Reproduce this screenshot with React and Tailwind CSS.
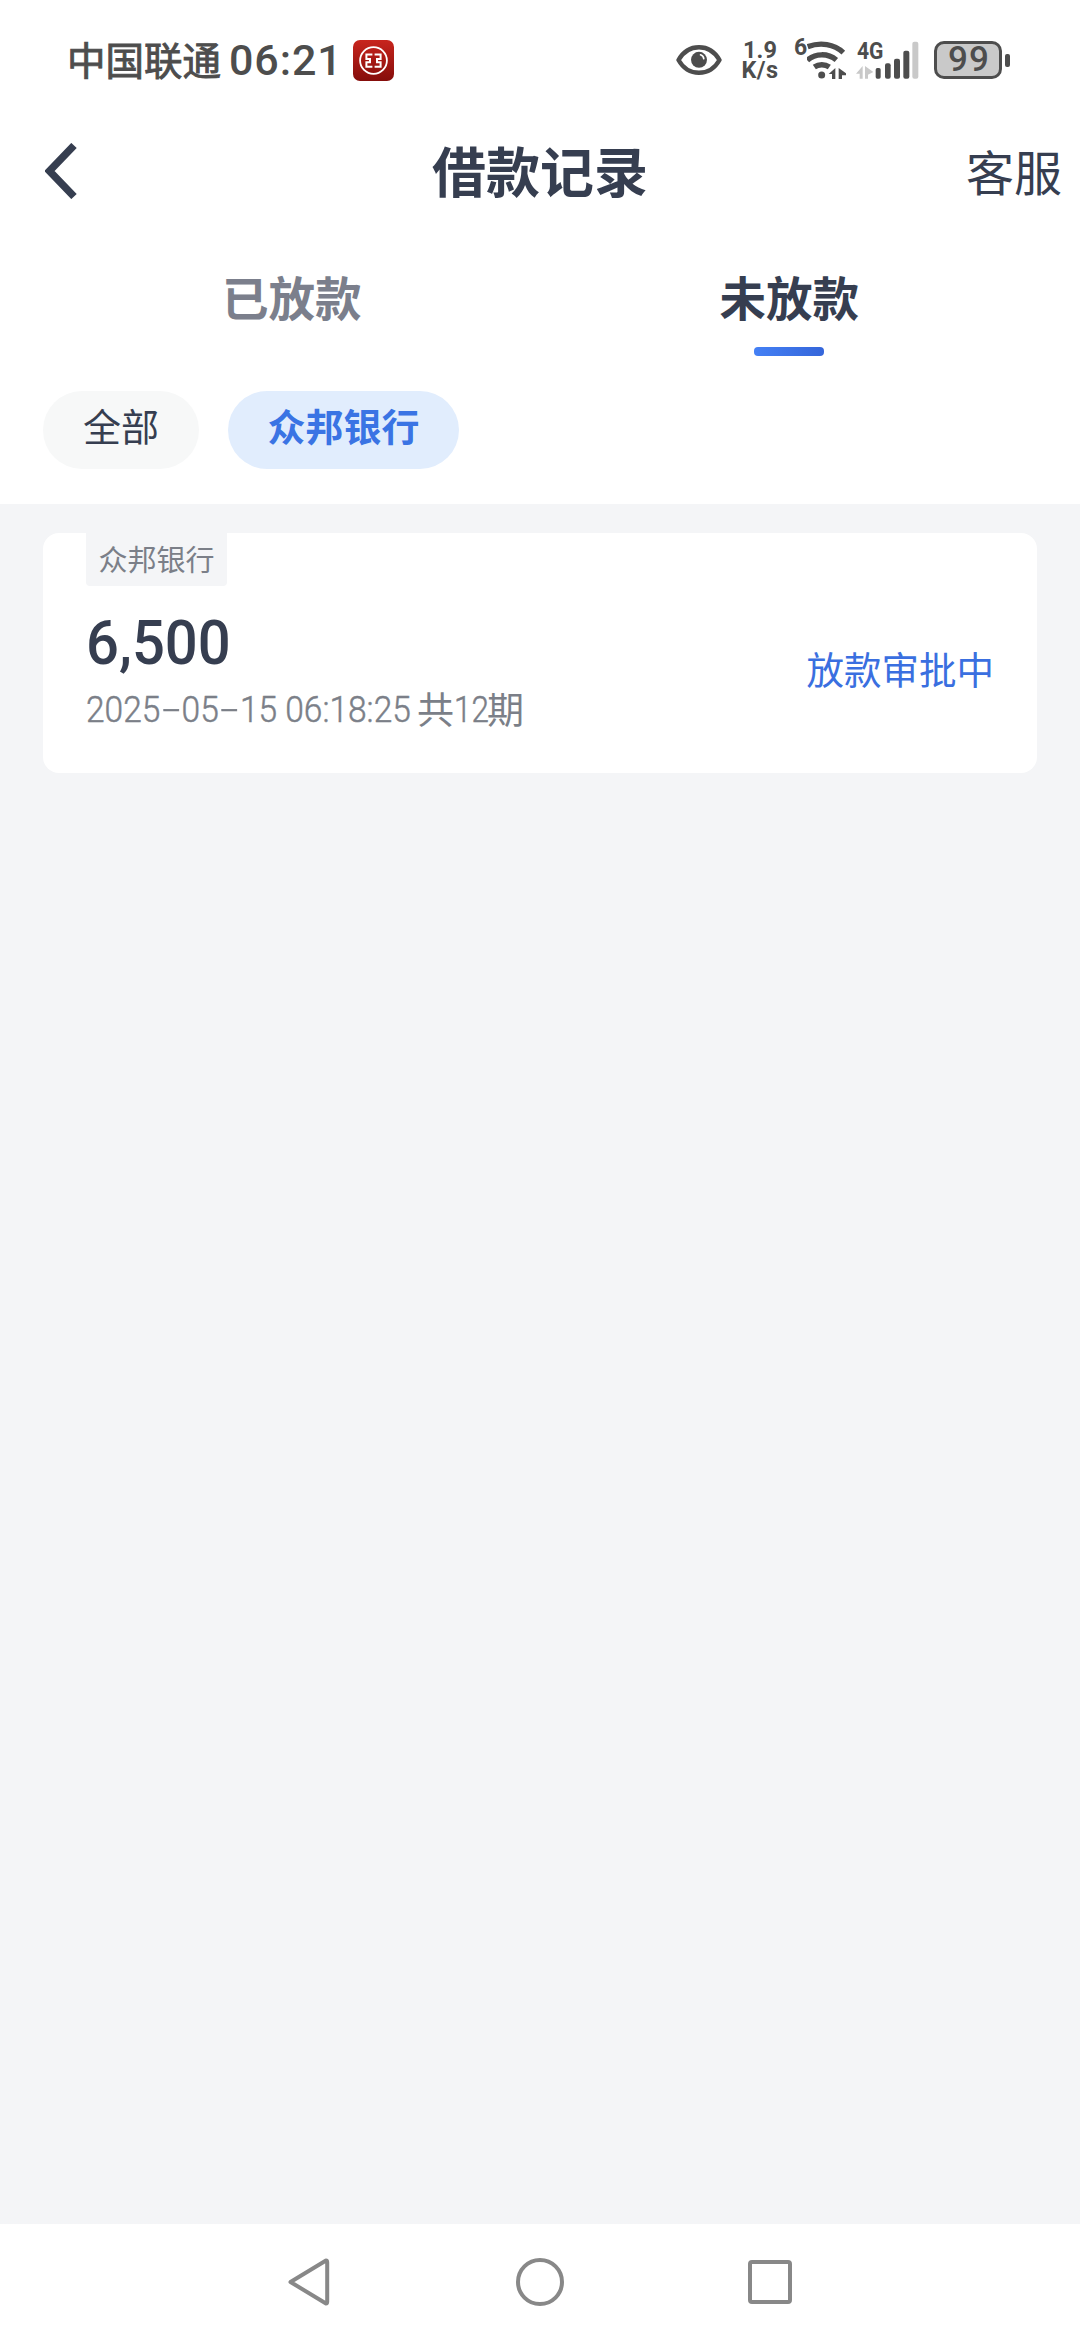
import React from "react";

const INK = "#4d4d4d";

function BankAppIcon() {
  return (
    <svg className="ml-[15px] h-[41px] w-[41px] shrink-0" viewBox="0 0 41 41">
      <defs>
        <linearGradient id="bankRed" x1="0" y1="0" x2="0" y2="1">
          <stop offset="0" stopColor="#c8251d" />
          <stop offset="1" stopColor="#850d0b" />
        </linearGradient>
      </defs>
      <rect width="41" height="41" rx="7" fill="url(#bankRed)" />
      <circle cx="20.5" cy="20.5" r="13.4" fill="none" stroke="#fff" strokeWidth="1.800" />
      <g fill="none" stroke="#fff" strokeWidth="2">
        <path d="M19.400 14.500h-6v4.400h3.600v3.400h-3.600v4.400h6" />
        <path d="M21.600 14.500h6v4.400h-3.600v3.400h3.600v4.400h-6" />
      </g>
    </svg>
  );
}

function EyeIcon() {
  return (
    <svg className="h-[32px] w-[46px] shrink-0" viewBox="0 0 46 32">
      <path
        d="M2.5 16C7 8 14.500 3.200 23 3.200S39 8 43.500 16C39 24 31.500 28.800 23 28.800S7 24 2.500 16Z"
        fill="none"
        stroke={INK}
        strokeWidth="4.400"
        strokeLinejoin="round"
      />
      <circle cx="23" cy="15.800" r="8" fill={INK} />
      <path d="M24.500 10.800q3 1 3.300 4" fill="none" stroke="#fff" strokeWidth="1.600" strokeLinecap="round" />
    </svg>
  );
}

/* Drawn on a triple-density grid: one screen pixel is three units. */
function WifiIcon() {
  return (
    <svg className="h-[40px] w-[39px] shrink-0" viewBox="441 58 117 120">
      <g fill="none" stroke={INK} strokeWidth="16">
        <path d="M443 78C482 64 522 70 550 96" />
        <path d="M442 119C466 97 504 97 529 118" />
        <path d="M463 139C476 130 495 130 508 139" />
      </g>
      <circle cx="485" cy="163" r="10.500" fill={INK} />
      <path d="M526 142v33h-10v-15h-10zM536 142v33h10v-11h12v-6z" fill={INK} />
    </svg>
  );
}

function SignalIcon() {
  return (
    <svg className="h-[40px] w-[63px] shrink-0" viewBox="588 58 189 120">
      <path d="M608 136v38h-9v-15h-11zM615 136v38h9v-12l16-8z" fill="#c9c9c9" />
      <g fill={INK}>
        <rect x="647" y="142" width="15" height="32" rx="5" />
        <rect x="675" y="128" width="17" height="46" rx="6" />
        <rect x="702" y="114" width="18" height="60" rx="6" />
        <rect x="730" y="90" width="18" height="84" rx="6" />
      </g>
      <rect x="757" y="63" width="18" height="111" rx="6" fill="#c9c9c9" />
    </svg>
  );
}

function Battery() {
  return (
    <div className="ml-[15px] flex items-center gap-[3px]">
      <div className="flex h-[38px] w-[68px] items-center justify-center rounded-[10px] border-[3px] border-[#4d4d4d] bg-[#c9c9c9]">
        <span className="pl-[2px] font-[Roboto] text-[35px] font-medium leading-[32px] tracking-[1px] text-[#4d4d4d]">99</span>
      </div>
      <div className="h-[13px] w-[5px] rounded-[2px] bg-[#4d4d4d]" />
    </div>
  );
}

function StatusBar() {
  return (
    <div className="flex h-[120px] items-center justify-between pl-[67px] pr-[70px] text-[#4d4d4d]">
      <div className="flex h-[42px] items-center">
        <span className="pb-[4px] text-[38.500px] leading-[42px] [-webkit-text-stroke:0.9px_#4d4d4d]">中国联通</span>
        <span className="ml-[8px] w-[109px] whitespace-nowrap font-[Roboto] text-[43px] font-medium leading-[42px] tracking-[0.9px]">06:21</span>
        <BankAppIcon />
      </div>
      <div className="flex h-[42px] items-center">
        <EyeIcon />
        <div className="ml-[17px] flex w-[42px] flex-col items-center font-[Roboto] text-[23.500px] font-bold leading-[20px]">
          <span>1.9</span>
          <span className="tracking-[0.5px]">K/s</span>
        </div>
        <span className="ml-[13px] mt-[-1px] w-[13px] self-start font-[Roboto] text-[23px] font-bold leading-[20px]">6</span>
        <WifiIcon />
        <div className="relative ml-[10px] flex">
          <SignalIcon />
          <span className="absolute left-px top-[2px] origin-left scale-x-[0.88] font-[Roboto] text-[24px] font-bold leading-[19px]">4G</span>
        </div>
        <Battery />
      </div>
    </div>
  );
}

function Header() {
  return (
    <header className="grid h-[106px] grid-cols-[1fr_auto_1fr] items-center pb-[5px] pl-[45px] pr-[18px] text-[#363e50]">
      <svg className="h-[56px] w-[33px]" viewBox="0 0 33 56">
        <path d="M29 2.500 4.500 28 29 53.500" fill="none" stroke="#363e50" strokeWidth="7.500" />
      </svg>
      <h1 className="ml-[-27px] pb-[2px] text-[54px] font-bold leading-none">借款记录</h1>
      <span className="justify-self-end pb-[2px] text-[48px] leading-none">客服</span>
    </header>
  );
}

function Tabs() {
  return (
    <nav className="grid h-[130px] grid-cols-2 pl-[43px] pr-[42px] pt-[47px] text-center text-[46.500px] font-bold leading-[46px]">
      <span className="text-[#7b7f8c]">已放款</span>
      <div className="flex flex-col items-center text-[#363e50]">
        <span>未放款</span>
        <span className="mt-[28px] h-[9px] w-[70px] rounded-[4px] bg-linear-to-r from-[#4480f5] to-[#3566da]" />
      </div>
    </nav>
  );
}

function Filters() {
  return (
    <div className="flex h-[148px] gap-[29px] px-[43px] pt-[35px] text-[38px]">
      <button className="flex h-[78px] w-[156px] justify-center rounded-full bg-[#f7f8f8] leading-[68px] text-[#363e50]">全部</button>
      <button className="flex h-[78px] w-[231px] justify-center rounded-full bg-[#e1edfd] font-bold leading-[68px] text-[#3a74e4]">众邦银行</button>
    </div>
  );
}

function Dash() {
  return (
    <span className="inline-block w-[23.500px] text-center">
      <span className="inline-block scale-x-[1.9]">-</span>
    </span>
  );
}

function LoanCard() {
  return (
    <article className="flex h-[240px] items-center justify-between rounded-[16px] bg-white pl-[43px] pr-[43px]">
      <div className="flex h-full flex-col items-start">
        <span className="h-[53px] w-[141px] rounded-b-[4px] bg-[#f4f5f7] text-center text-[29px] leading-[50px] text-[#7b7f88]">众邦银行</span>
        <strong className="mt-[25px] origin-left scale-x-[0.95] font-[Roboto] text-[61px] font-medium leading-[64px] text-[#363e50]">6,500</strong>
        <div className="mt-[9px] flex items-center whitespace-nowrap font-[Roboto] text-[37px] font-light leading-[48px] text-[#7b7f88]">
          <span className="block w-[331px] [-webkit-text-stroke:0.5px_#7b7f88]">
            <span className="block origin-left scale-x-[0.905]">
              2025
              <Dash />
              05
              <Dash />
              15 06:18:25
            </span>
          </span>
          <span className="pb-[4px] font-['Noto_Sans_CJK_SC'] text-[37px] font-normal">共</span>
          <span className="block w-[33px] [-webkit-text-stroke:0.5px_#7b7f88]">
            <span className="block origin-left scale-x-[0.85]">12</span>
          </span>
          <span className="pb-[4px] font-['Noto_Sans_CJK_SC'] text-[37px] font-normal">期</span>
        </div>
      </div>
      <span className="pt-[30px] text-[37.500px] text-[#3a6fe0]">放款审批中</span>
    </article>
  );
}

function NavigationBar() {
  return (
    <footer className="flex h-[116px] items-center justify-between bg-white pl-[287px] pr-[288px]">
      <svg className="h-[50px] w-[44px]" viewBox="0 0 44 50" fill="none" stroke="#888" strokeWidth="4" strokeLinejoin="round">
        <path d="M3.500 25 39 3.500q1.200 0 1.200 2v39q0 2-1.200 2Z" />
      </svg>
      <div className="h-[48px] w-[48px] rounded-full border-4 border-[#888]" />
      <div className="h-[44px] w-[44px] rounded-[4px] border-4 border-[#888]" />
    </footer>
  );
}

export default function App() {
  return (
    <div className="flex h-[2340px] w-[1080px] flex-col overflow-hidden bg-white font-['Noto_Sans_CJK_SC',sans-serif]">
      <StatusBar />
      <Header />
      <Tabs />
      <Filters />
      <main className="flex-1 bg-[#f4f5f7] px-[43px] pt-[29px]">
        <LoanCard />
      </main>
      <NavigationBar />
    </div>
  );
}
